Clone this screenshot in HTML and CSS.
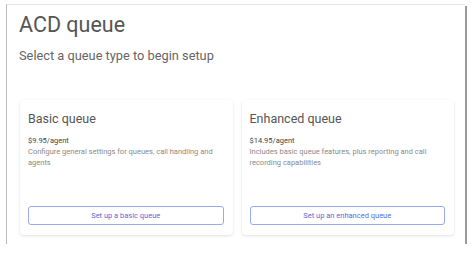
FILE: index.html
```html
<!DOCTYPE html>
<html lang="en">
<head>
    <meta charset="UTF-8">
    <meta name="viewport" content="width=device-width, initial-scale=1.0">
    <title>ACD queue</title>
    <link rel="stylesheet" href="styles.css">
</head>
<body>
    <div class="frame">
        <h1>ACD queue</h1>
        <p class="subtitle">Select a queue type to begin setup</p>

        <div class="cards">
            <div class="card">
                <h2>Basic queue</h2>
                <p class="price">$9.95/agent</p>
                <p class="desc">Configure general settings for queues, call handling and agents</p>
                <button>Set up a basic queue</button>
            </div>
            <div class="card">
                <h2>Enhanced queue</h2>
                <p class="price">$14.95/agent</p>
                <p class="desc">Includes basic queue features, plus reporting and call recording capabilities</p>
                <button>Set up an enhanced queue</button>
            </div>
        </div>
    </div>
</body>
</html>
```

FILE: styles.css
```css
body {
    font-family: Roboto, "Liberation Sans", sans-serif;
    background-color: #fff;
    margin: 0;
    padding: 4px 0 0 6px;
}

.frame {
    width: 459px;
    height: 240px;
    box-sizing: border-box;
    background: #fff;
    border-left: 1px solid #bdbdbd;
    border-top: 1px solid #e4e4e4;
    box-shadow: 2px 2px 0 #9a9a9a;
    padding: 6px 11px 0 12px;
}

h1 {
    font-size: 21.5px;
    font-weight: 400;
    line-height: 28px;
    color: #555;
    margin: 0;
}

.subtitle {
    font-size: 12.8px;
    line-height: 18px;
    color: #666;
    margin: 8px 0 0 0;
}

.cards {
    display: grid;
    grid-template-columns: 1fr 1fr;
    gap: 9px;
    margin-top: 35px;
    padding-left: 1px;
}

.card {
    height: 135px;
    box-sizing: border-box;
    display: flex;
    flex-direction: column;
    background: #fff;
    border-radius: 4px;
    box-shadow: 0 1px 3px rgba(0, 0, 0, 0.12);
    padding: 11px 9px 10px 8px;
}

h2 {
    font-size: 12.5px;
    font-weight: 400;
    line-height: 15px;
    color: #555;
    margin: 0;
}

.price {
    font-size: 7.5px;
    line-height: 11px;
    color: #444;
    margin: 9px 0 0 0;
}

.desc {
    font-size: 7.5px;
    line-height: 11px;
    color: #8a8a8a;
    margin: 0;
}

button {
    margin-top: auto;
    height: 19px;
    background: #fff;
    border: 1px solid #9aa8ef;
    border-radius: 3px;
    font-family: inherit;
    font-size: 7.5px;
    color: #5a6bd8;
    cursor: pointer;
}
```
